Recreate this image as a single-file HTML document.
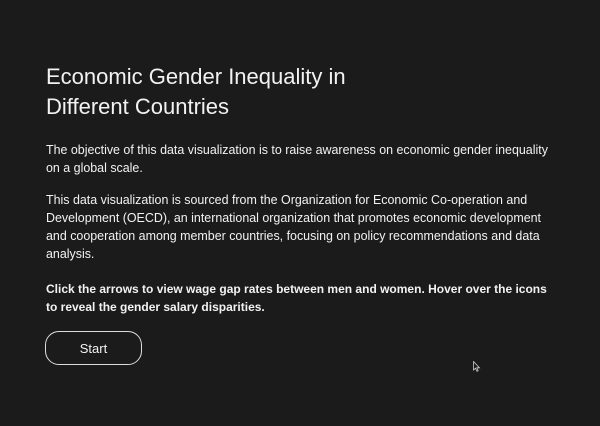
<!DOCTYPE html>
<html><head><style>
html,body{margin:0;padding:0;width:600px;height:426px;background:#1b1b1b;overflow:hidden}
body{font-family:"Liberation Sans",sans-serif;color:#f2f2f2;position:relative}
.t{position:absolute;left:46px;top:62px;font-size:22px;line-height:30px;white-space:nowrap}
.p{position:absolute;left:46px;font-size:12.45px;line-height:18px;white-space:nowrap}
.b{font-weight:bold;font-size:12px}
.btn{position:absolute;left:45px;top:331px;width:95px;height:32px;border:1px solid #ddd;border-radius:14px;box-sizing:content-box;text-align:center;line-height:33px;font-size:13px}
</style></head><body>
<div class="t">Economic Gender Inequality in<br>Different Countries</div>
<div class="p" style="top:141px">The objective of this data visualization is to raise awareness on economic gender inequality<br>on a global scale.</div>
<div class="p" style="top:191px">This data visualization is sourced from the Organization for Economic Co-operation and<br>Development (OECD), an international organization that promotes economic development<br>and cooperation among member countries, focusing on policy recommendations and data<br>analysis.</div>
<div class="p b" style="top:280px">Click the arrows to view wage gap rates between men and women. Hover over the icons<br>to reveal the gender salary disparities.</div>
<div class="btn">Start</div>
<svg style="position:absolute;left:473px;top:361px" width="8" height="11" viewBox="0 0 8 11"><path d="M0.5 0.5V9L2.5 7.2L4 10.3L5.2 9.7L3.8 6.8H6.5Z" fill="#1b1b1b" stroke="#ccc" stroke-width="0.8"/></svg>
</body></html>
